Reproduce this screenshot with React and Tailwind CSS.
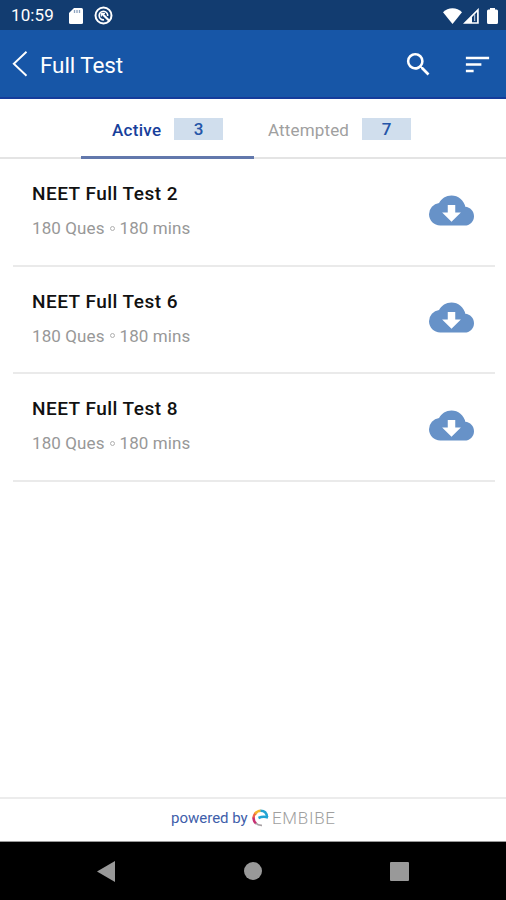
import { MdCloudDownload, MdSearch, MdSort } from 'react-icons/md';

const tests = [
    { id: 1, title: 'NEET Full Test 2', questions: 180, minutes: 180 },
    { id: 2, title: 'NEET Full Test 6', questions: 180, minutes: 180 },
    { id: 3, title: 'NEET Full Test 8', questions: 180, minutes: 180 },
];

function StatusBar() {
    return (
        <div className="flex h-[30px] shrink-0 items-center bg-[#123c70] pl-[11px] pr-2 pt-px text-white">
            <span className="w-[58px] pt-px text-[17px] tracking-[0.1px]">10:59</span>
            <svg className="h-4 w-3.5" viewBox="0 0 14 16" fill="currentColor">
                <path d="M5 0h7.5Q14 0 14 1.5v13q0 1.500-1.500 1.500h-11Q0 16 0 14.500V5z" />
                <path d="M5.500 2v3M8 2v3M10.500 2v3" stroke="#8da3bf" strokeWidth="1.300" />
            </svg>
            <svg className="ml-[11px] h-[19px] w-[19px]" viewBox="0 0 19 19" fill="none" stroke="currentColor">
                <circle cx="9.500" cy="9.500" r="8" strokeWidth="2" />
                <path d="M10 13.800A4.300 4.300 0 1 1 13.700 10" strokeWidth="1.600" />
                <path d="M8 7.500l7.500 7.500" strokeWidth="2.200" />
                <path d="M7.300 10.500V7.300h3.700" strokeWidth="1.300" />
            </svg>
            <div className="ml-auto flex items-center">
                <svg className="h-4 w-[19px]" viewBox="0 0 19 16" fill="currentColor">
                    <path d="M9.500 16L0 4.200C5-1 14-1 19 4.200z" />
                </svg>
                <svg className="ml-px h-4 w-4" viewBox="0 0 16 16">
                    <path d="M14.900 2v13H2z" fill="none" stroke="currentColor" strokeWidth="1.700" />
                    <path d="M9 8.500V15H1.500z" fill="currentColor" />
                    <path d="M11.700 6.500V13" stroke="currentColor" strokeWidth="0.800" />
                </svg>
                <svg className="ml-2 h-4 w-[11px]" viewBox="0 0 11 16" fill="currentColor">
                    <path d="M3 0h5v1.500h1.500Q11 1.500 11 3v11.500Q11 16 9.500 16h-8Q0 16 0 14.500V3Q0 1.500 1.500 1.500H3z" />
                </svg>
            </div>
        </div>
    );
}

function Header() {
    return (
        <header className="flex h-[69px] shrink-0 items-center border-b-2 border-[#153c9b] bg-[#1756a7] pl-3 pr-[13px] pt-px text-white">
            <button type="button" aria-label="Back">
                <svg className="h-[26px] w-4" viewBox="0 0 16 26" fill="none" stroke="currentColor" strokeWidth="1.900">
                    <path d="M14.500 .8L1.800 12.700l12.700 12" />
                </svg>
            </button>
            <h1 className="ml-3 pt-0.5 text-[22.5px] leading-7 tracking-[-0.1px]">Full Test</h1>
            <button type="button" aria-label="Search" className="ml-auto">
                <MdSearch className="h-[31px] w-[31px]" />
            </button>
            <button type="button" aria-label="Sort" className="ml-7">
                <MdSort className="h-[31px] w-[31px]" />
            </button>
        </header>
    );
}

function Tabs() {
    return (
        <div className="flex h-[60px] shrink-0 border-b-2 border-[#e4e4e4] pl-[81px] text-[17px]">
            <div className="-mb-0.5 flex w-[173px] items-center border-b-[3px] border-[#6278ac] pl-[31px] pt-[3px]">
                <span className="w-[62px] pt-[3px] font-medium tracking-[0.3px] text-[#173f9b]">Active</span>
                <span className="flex h-[22px] w-[49px] items-center justify-center bg-[#d0deed] pt-0.5 font-medium text-[#2455a8]">3</span>
            </div>
            <div className="flex items-center pl-3.5 pt-0.5">
                <span className="w-[94px] pt-[3px] tracking-[0.15px] text-[#a0a0a0]">Attempted</span>
                <span className="flex h-[22px] w-[49px] items-center justify-center bg-[#d0deed] pt-0.5 font-medium text-[#2455a8]">7</span>
            </div>
        </div>
    );
}

function TestRow({ test }) {
    return (
        <li className="ml-[13px] mr-[11px] flex h-[107.5px] justify-between border-b-2 border-[#eaeaea] pl-[19px] pr-[21px]">
            <div className="pt-[23px]">
                <h2 className="text-[19px] font-medium leading-6 tracking-[0.48px] text-[#111]">{test.title}</h2>
                <p className="mt-2.5 flex items-center text-[17px] leading-6 tracking-[0.1px] text-[#989898]">
                    {test.questions} Ques
                    <span className="mx-[5px] h-[5px] w-[5px] rounded-full border border-[#b0b0b0]" />
                    {test.minutes} mins
                </p>
            </div>
            <button type="button" aria-label="Download" className="h-[45px] pt-[28.5px]">
                <MdCloudDownload className="h-[45px] w-[45px] text-[#6792c8]" />
            </button>
        </li>
    );
}

function Footer() {
    return (
        <footer className="flex h-[45px] shrink-0 items-center border-b border-t-2 border-b-[#999] border-t-[#ececec] pl-[171px] pb-[3px]">
            <span className="w-[81px] whitespace-nowrap text-[15px] text-[#405eaa]">powered by</span>
            <svg className="mb-0.5 h-[18px] w-[17px]" viewBox="0 0 17 18" fill="none" strokeWidth="2.500">
                <path d="M1.600 9.500A7 7 0 0 1 4.500 3.500" stroke="#ee6547" />
                <path d="M3.200 4.700A7 7 0 0 1 8.800 1.800" stroke="#f4b52d" />
                <path d="M8.500 1.800Q14.500 1.700 15 8" stroke="#22a4d3" />
                <path d="M16 8.500Q11 7 6.500 9" stroke="#22a4d3" />
                <path d="M1.600 8.500Q1.400 12.500 4.200 14.500" stroke="#c92f72" />
                <path d="M3.800 14.200Q6 16.500 10 16.300" stroke="#a8a1a5" strokeWidth="1.800" />
            </svg>
            <span className="mb-0.5 ml-[3px] text-[17px] font-light leading-5 tracking-[0.7px] text-[#a0a0a0]">EMBIBE</span>
        </footer>
    );
}

function NavBar() {
    return (
        <nav className="flex h-[58px] shrink-0 items-center justify-between bg-black pl-[97px] pr-[97px] text-[#999]">
            <svg className="h-[21px] w-[18px]" viewBox="0 0 18 21" fill="currentColor">
                <path d="M0 10.500L18 0v21z" />
            </svg>
            <div className="h-[18px] w-[18px] rounded-full bg-[#999]" />
            <div className="h-[19px] w-[19px] rounded-[1px] bg-[#999]" />
        </nav>
    );
}

export default function App() {
    return (
        <div className="flex h-[900px] w-[506px] flex-col overflow-hidden bg-white font-[Roboto,sans-serif]">
            <StatusBar />
            <Header />
            <Tabs />
            <ul className="flex-1">
                {tests.map((test) => (
                    <TestRow key={test.id} test={test} />
                ))}
            </ul>
            <Footer />
            <NavBar />
        </div>
    );
}
